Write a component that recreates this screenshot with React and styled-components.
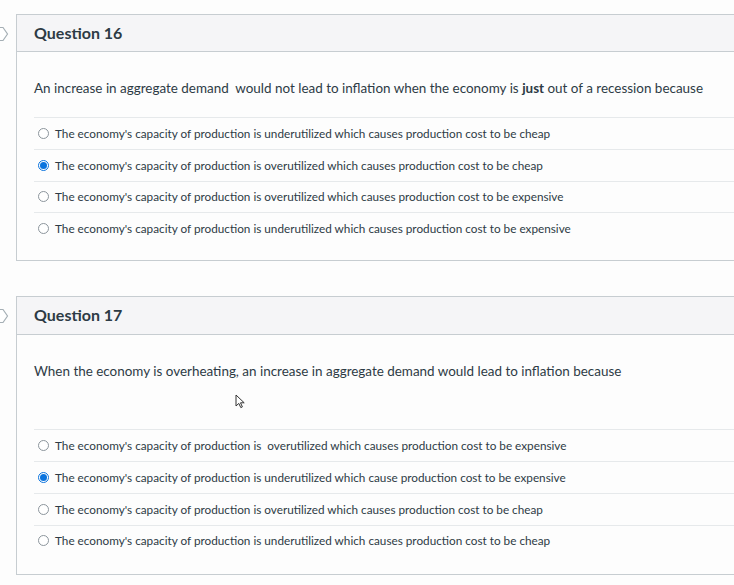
import styled, { createGlobalStyle } from "styled-components";

const GlobalStyle = createGlobalStyle`
  html, body {
    margin: 0;
    padding: 0;
    background: #fdfdfd;
    font-family: Lato, "Open Sans", "Liberation Sans", sans-serif;
    color: #2d3b45;
  }
`;

const Page = styled.div`
  position: relative;
  padding-top: 14px;
  display: flex;
  flex-direction: column;
  gap: 35px;
  overflow: hidden;
`;

const QuestionRow = styled.div`
  display: flex;
  align-items: flex-start;
`;

const MarkerCol = styled.div`
  width: 16px;
  flex: none;
  padding-top: 12px;
  svg {
    display: block;
  }
`;

const Card = styled.div`
  flex: 1;
  border: 1px solid #c7cdd1;
  border-right: none;
  background: #fdfdfd;
`;

const Header = styled.div`
  height: ${(p) => (p.$tall ? 38 : 37)}px;
  box-sizing: border-box;
  padding: 0 0 2px 17px;
  display: flex;
  align-items: center;
  background: #f5f5f7;
  border-bottom: 1px solid #c7cdd1;
  font-size: 16px;
  font-weight: 700;
  color: #2d3b45;
`;

const Body = styled.div`
  padding: 27px 0 ${(p) => p.$bottom}px 17px;
`;

const Prompt = styled.p`
  margin: 0;
  font-size: 13.45px;
  line-height: 18px;
  color: #2d3b45;
  b {
    font-weight: 700;
  }
`;

const Spacer = styled.div`
  height: ${(p) => p.$h}px;
`;

const Answers = styled.ul`
  list-style: none;
  margin: 0;
  padding: 0;
`;

const Answer = styled.li`
  display: flex;
  align-items: center;
  gap: 6px;
  height: 30.8px;
  padding-left: 4px;
  border-top: 1px solid #e6e9eb;
  font-size: 11.75px;
  color: #2d3b45;
`;

const Radio = styled.span`
  width: 11px;
  height: 11px;
  box-sizing: border-box;
  border-radius: 50%;
  border: 1px solid ${(p) => (p.$checked ? "#0b74de" : "#8c959c")};
  background: #fff;
  display: flex;
  align-items: center;
  justify-content: center;
  flex: none;
  &::after {
    content: "";
    width: 7px;
    height: 7px;
    border-radius: 50%;
    background: ${(p) => (p.$checked ? "#0b74de" : "transparent")};
  }
`;

const Cursor = styled.svg`
  position: absolute;
  left: 235px;
  top: 394px;
`;

const Marker = () => (
  <MarkerCol>
    <svg width="16" height="16" viewBox="0 0 16 16">
      <path d="M-4 1.5 H3 L7.5 8 L3 14.5 H-4 Z" fill="#fff" stroke="#a5afb5" strokeWidth="1.2" />
    </svg>
  </MarkerCol>
);

const questions = [
  {
    title: "Question 16",
    prompt: (
      <>
        An increase in aggregate demand&nbsp; would not lead to inflation when the economy is{" "}
        <b>just</b> out of a recession because
      </>
    ),
    gap: 0,
    bottom: 16,
    answers: [
      "The economy's capacity of production is underutilized which causes production cost to be cheap",
      "The economy's capacity of production is overutilized which causes production cost to be cheap",
      "The economy's capacity of production is overutilized which causes production cost to be expensive",
      "The economy's capacity of production is underutilized which causes production cost to be expensive",
    ],
    checked: 1,
  },
  {
    title: "Question 17",
    prompt: "When the economy is overheating, an increase in aggregate demand would lead to inflation because",
    gap: 29,
    bottom: 18,
    answers: [
      "The economy's capacity of production is \u00a0overutilized which causes production cost to be expensive",
      "The economy's capacity of production is underutilized which cause production cost to be expensive",
      "The economy's capacity of production is overutilized which causes production cost to be cheap",
      "The economy's capacity of production is underutilized which causes production cost to be cheap",
    ],
    checked: 1,
  },
];

export default function App() {
  return (
    <>
      <GlobalStyle />
      <Page>
        {questions.map((q, i) => (
          <QuestionRow key={q.title}>
            <Marker />
            <Card>
              <Header $tall={i === 1}>{q.title}</Header>
              <Body $bottom={q.bottom}>
                <Prompt>{q.prompt}</Prompt>
                <Spacer $h={20 + q.gap} />
                <Answers>
                  {q.answers.map((a, j) => (
                    <Answer key={j}>
                      <Radio $checked={j === q.checked} />
                      {a}
                    </Answer>
                  ))}
                </Answers>
              </Body>
            </Card>
          </QuestionRow>
        ))}
        <Cursor width="12" height="16" viewBox="0 0 12 16">
          <path d="M1 1 V12 L3.8 9.4 L5.8 13.6 L7.4 12.9 L5.5 8.8 H9.2 Z" fill="#fff" stroke="#333" strokeWidth="1" strokeLinejoin="round" />
        </Cursor>
      </Page>
    </>
  );
}
